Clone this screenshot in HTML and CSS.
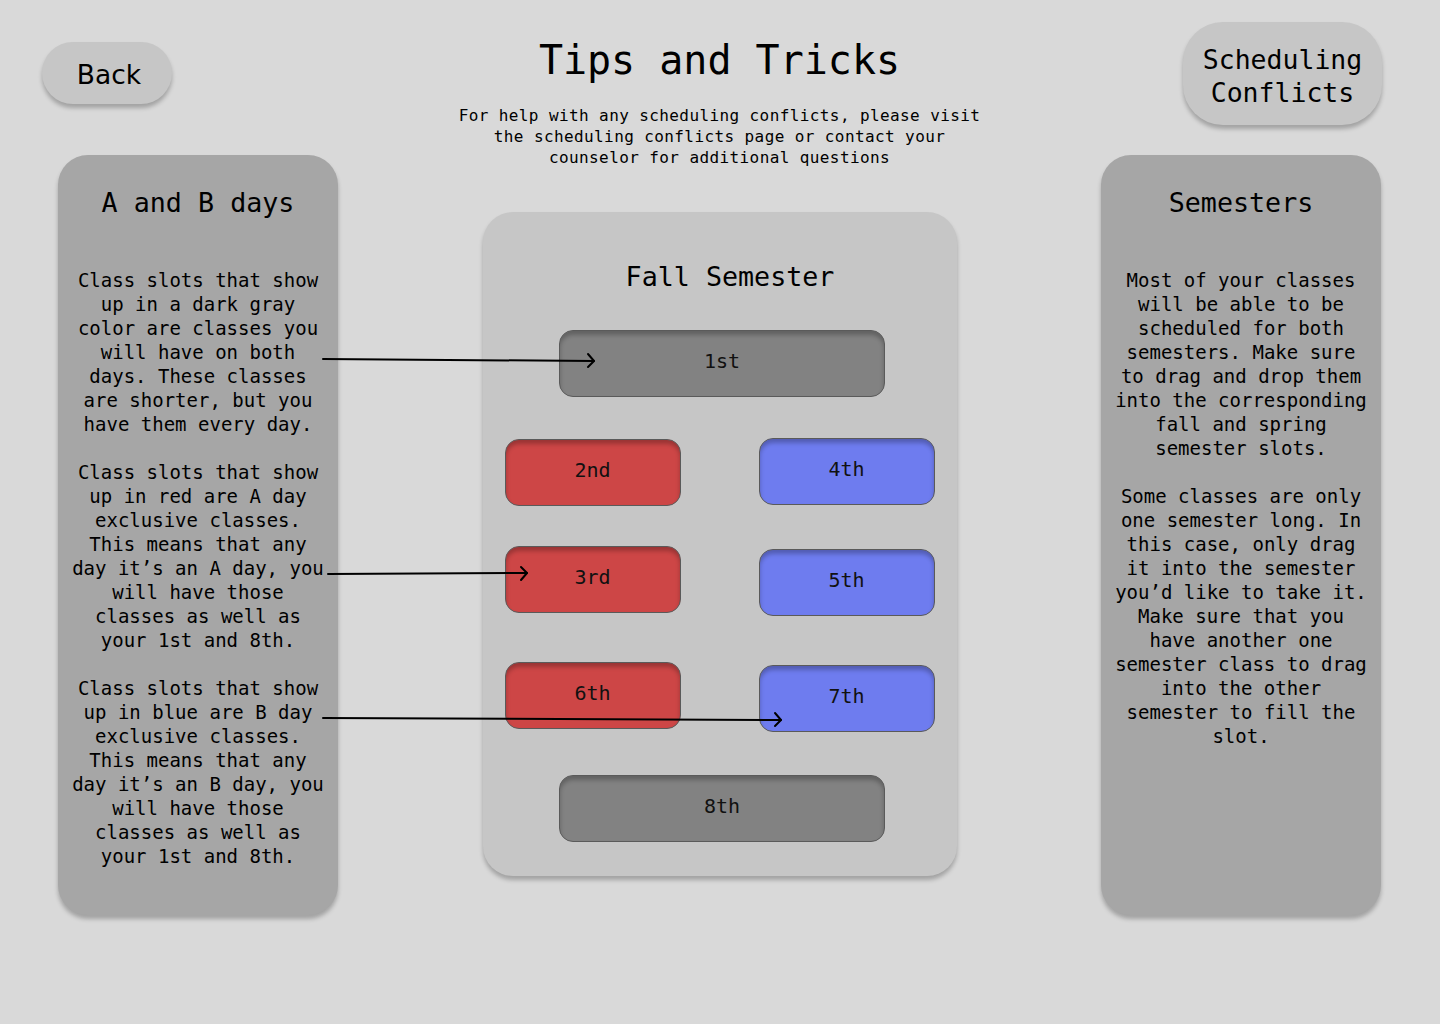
FILE: index.html
```html
<!DOCTYPE html>
<html lang="en">
<head>
<meta charset="utf-8">
<title>Tips and Tricks</title>
<link rel="stylesheet" href="styles.css">
</head>
<body>
<div class="page">
  <aside class="col col-left">
    <a class="btn btn-back" href="#">Back</a>
    <section class="card">
      <h2 class="card-title">A and B days</h2>
      <p>Class slots that show up in a dark gray color are classes you will have on both days. These classes are shorter, but you have them every day.</p>
      <p>Class slots that show up in red are A day exclusive classes. This means that any day it’s an A day, you will have those classes as well as your 1st and 8th.</p>
      <p>Class slots that show up in blue are B day exclusive classes. This means that any day it’s an B day, you will have those classes as well as your 1st and 8th.</p>
    </section>
  </aside>

  <main class="col col-mid">
    <h1 class="title">Tips and Tricks</h1>
    <p class="subtitle">For help with any scheduling conflicts, please visit<br>the scheduling conflicts page or contact your<br>counselor for additional questions</p>
    <section class="semester">
      <h2 class="card-title semester-title">Fall Semester</h2>
      <div class="slot slot-gray slot-wide">1st</div>
      <div class="slot-grid">
        <div class="slot slot-red">2nd</div>
        <div class="slot slot-blue up1">4th</div>
        <div class="slot slot-red">3rd</div>
        <div class="slot slot-blue down3">5th</div>
        <div class="slot slot-red">6th</div>
        <div class="slot slot-blue down3">7th</div>
      </div>
      <div class="slot slot-gray slot-wide slot-last">8th</div>
    </section>
  </main>

  <aside class="col col-right">
    <a class="btn btn-conflicts" href="#">Scheduling<br>Conflicts</a>
    <section class="card">
      <h2 class="card-title">Semesters</h2>
      <p>Most of your classes will be able to be scheduled for both semesters. Make sure to drag and drop them into the corresponding fall and spring semester slots.</p>
      <p>Some classes are only one semester long. In this case, only drag it into the semester you’d like to take it. Make sure that you have another one semester class to drag into the other semester to fill the slot.</p>
    </section>
  </aside>

  <svg class="arrows" width="1440" height="1024" viewBox="0 0 1440 1024" aria-hidden="true">
    <g fill="none" stroke="#000" stroke-width="2" stroke-linecap="round" stroke-linejoin="round">
      <path d="M323 359 L594 361"/>
      <path d="M588 354 L594 361 L588 367"/>
      <path d="M328 574 L527 573"/>
      <path d="M521 567 L527 573 L521 580"/>
      <path d="M323 718 L781 720"/>
      <path d="M775 713 L781 720 L775 726"/>
    </g>
  </svg>
</div>
</body>
</html>
```

FILE: styles.css
```css
* { box-sizing: border-box; }

html, body {
  margin: 0;
  padding: 0;
  background: #d9d9d9;
}

body {
  font-family: "DejaVu Sans Mono", monospace;
  color: #000;
}

.page {
  position: relative;
  width: 1440px;
  height: 1024px;
  display: grid;
  grid-template-columns: 296px 1fr 280px;
  padding: 0 59px 0 42px;
}

.col {
  display: flex;
  flex-direction: column;
}

.btn {
  display: flex;
  align-items: center;
  justify-content: center;
  text-align: center;
  color: #000;
  text-decoration: none;
  background: #c6c6c6;
  box-shadow: 0 4px 4px rgba(0, 0, 0, 0.25);
}

.btn-back {
  margin-top: 42px;
  width: 130px;
  height: 62px;
  border-radius: 31px;
  font-family: "DejaVu Sans", sans-serif;
  font-size: 26.5px;
  padding-top: 2px;
  padding-left: 4px;
  align-self: flex-start;
}

.btn-conflicts {
  margin-top: 22px;
  width: 199px;
  height: 103px;
  border-radius: 40px;
  font-size: 26.5px;
  line-height: 33px;
  padding-top: 4px;
  align-self: flex-end;
  margin-right: -1px;
}

.card {
  width: 280px;
  height: 760px;
  background: #a6a6a6;
  border-radius: 30px;
  box-shadow: 0 4px 4px rgba(0, 0, 0, 0.25);
  padding: 32px 10px 0;
  text-align: center;
}

.col-left .card {
  margin-left: 16px;
  margin-top: 51px;
}

.col-right .card {
  margin-top: 30px;
}

.card-title {
  margin: 0;
  font-weight: normal;
  font-size: 26.7px;
  line-height: 32px;
}

.card p {
  margin: 0;
  font-size: 19px;
  line-height: 24px;
}

.card .card-title + p {
  margin-top: 49px;
}

.card p + p {
  margin-top: 24px;
}

.col-mid {
  align-items: center;
}

.title {
  margin: 36px 0 0;
  font-weight: normal;
  font-size: 40px;
  line-height: 48px;
  text-align: center;
}

.subtitle {
  margin: 21px 0 0;
  font-size: 16px;
  letter-spacing: 0.4px;
  line-height: 21px;
  text-align: center;
}

.semester {
  margin-top: 44px;
  width: 474px;
  height: 664px;
  background: #c6c6c6;
  border-radius: 30px;
  box-shadow: 0 4px 4px rgba(0, 0, 0, 0.25);
  padding: 49px 22px 0;
  display: flex;
  flex-direction: column;
  align-items: center;
  text-align: center;
}

.semester-title {
  padding-left: 21px;
}

.slot {
  display: flex;
  align-items: center;
  justify-content: center;
  height: 67px;
  padding-bottom: 5px;
  font-size: 20px;
  color: #111;
  border: 1px solid #5a5a5a;
  border-radius: 14px;
  box-shadow: inset 0 4px 4px rgba(0, 0, 0, 0.25);
}

.slot-gray { background: #828282; }
.slot-red { background: #cd4646; }
.slot-blue { background: #6e7cef; }

.slot-wide {
  width: 326px;
  margin-left: 5px;
}

.semester .semester-title + .slot {
  margin-top: 37px;
}

.slot-grid {
  margin-top: 42px;
  width: 430px;
  display: grid;
  grid-template-columns: 176px 176px;
  justify-content: space-between;
  grid-template-rows: 67px 67px 67px;
  row-gap: 40px;
  align-items: start;
}

.slot-grid .slot:nth-child(5),
.slot-grid .slot:nth-child(6) {
  margin-top: 9px;
}

.up1 { transform: translateY(-1px); }
.down3 { position: relative; top: 3px; }

.slot-last {
  margin-top: 55px;
}

.arrows {
  position: absolute;
  left: 0;
  top: 0;
  pointer-events: none;
}
```
